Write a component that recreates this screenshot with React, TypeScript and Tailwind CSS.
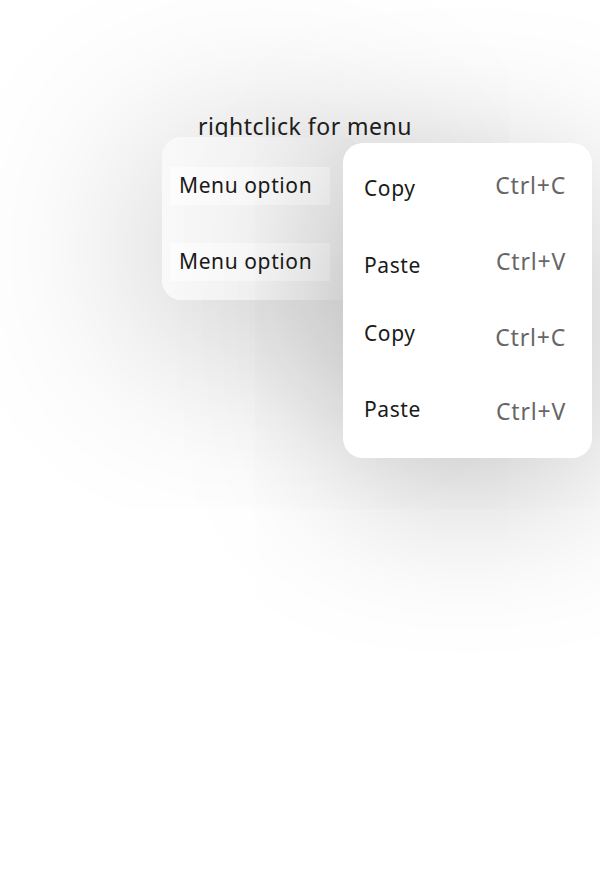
import React from "react";

export default function App() {
  const font = { fontFamily: "'Noto Sans', 'Open Sans', sans-serif" };
  const items = [
    { label: "Copy", key: "Ctrl+C", cls: "pt-[33px] pb-[23px]", k: "-translate-y-[3px]" },
    { label: "Paste", key: "Ctrl+V", cls: "pt-[30px] pb-[22px]", k: "-translate-y-[4px]" },
    { label: "Copy", key: "Ctrl+C", cls: "pt-[22px] pb-[30px]", k: "translate-y-[4px]" },
    { label: "Paste", key: "Ctrl+V", cls: "pt-[22px] pb-[30px]", k: "translate-y-[2px]" },
  ];
  return (
    <div className="relative w-[600px] h-[888px] bg-white overflow-hidden" style={font}>
      <div className="absolute left-[198px] top-[108px] text-[23px] tracking-[0.5px] leading-[36px] text-[#222]">
        rightclick for menu
      </div>
      <div className="absolute left-[162px] top-[137px] w-[200px] h-[163px] rounded-[20px] bg-gradient-to-r from-[#f9f9f9] to-[#ededed] shadow-[0_30px_200px_rgba(0,0,0,0.3)] px-[8px] pt-[30px] flex flex-col gap-[38px]">
        <div className="h-[38px] w-[160px] bg-white/50 flex items-center pl-[9px] text-[21px] tracking-[0.6px] text-[#1a1a1a]">Menu option</div>
        <div className="h-[38px] w-[160px] bg-white/50 flex items-center pl-[9px] text-[21px] tracking-[0.6px] text-[#1a1a1a]">Menu option</div>
      </div>
      <div className="absolute left-[343px] top-[143px] w-[249px] h-[315px] rounded-[20px] bg-white shadow-[0_30px_160px_rgba(0,0,0,0.25)] pl-[21px] pr-[26px] flex flex-col">
        {items.map((it, i) => (
          <div key={i} className={`flex justify-between items-center ${it.cls}`}>
            <span className="text-[21px] tracking-[0.6px] text-[#1a1a1a] leading-[24px]">{it.label}</span>
            <span className={`text-[23px] tracking-[0.8px] text-[#666] leading-[24px] ${it.k}`}>{it.key}</span>
          </div>
        ))}
      </div>
    </div>
  );
}
